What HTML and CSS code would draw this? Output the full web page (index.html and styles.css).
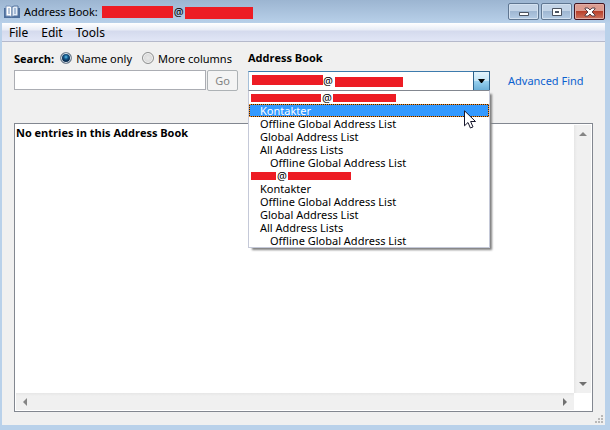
FILE: index.html
```html
<!DOCTYPE html>
<html lang="en">
<head>
    <meta charset="UTF-8">
    <meta name="viewport" content="width=device-width, initial-scale=1.0">
    <title>Address Book</title>
    <link rel="stylesheet" href="styles.css">
</head>
<body>
    <div class="window">
        <header class="titlebar">
            <svg class="book" width="16" height="14" viewBox="0 0 16 14">
                <path d="M0 3h2v8h5l1 1 1-1h5V3h2v10H0z" fill="#4d6f9c"/>
                <path d="M2 1h4l2 1v10l-2-1H2z" fill="#fff" stroke="#7894bb"/>
                <path d="M14 1h-4L8 2v10l2-1h4z" fill="#e3ecf7" stroke="#55749f"/>
                <path d="M4 4h2M4 6h2M4 8h2M10 4h2M10 6h2M10 8h2" stroke="#6a8cb8"/>
            </svg>
            <h1>Address Book:</h1>
            <span class="account"><i class="mask w71"></i>@<i class="mask w68 low"></i></span>
            <div class="caption-buttons">
                <button type="button" aria-label="Minimize">
                    <svg width="12" height="10" viewBox="0 0 12 10"><rect x="1" y="5" width="10" height="4" rx="1" fill="#4b5360"/><path d="M2 6h8v2H2z" fill="#fff"/></svg>
                </button>
                <button type="button" aria-label="Maximize">
                    <svg width="12" height="10" viewBox="0 0 12 10"><rect x="1" y="1" width="10" height="8" rx="1" fill="#4b5360"/><path d="M2 2h8v6H2z" fill="#fff"/><path d="M4 4h4v2H4z" fill="#4b5360"/></svg>
                </button>
                <button type="button" class="close" aria-label="Close">
                    <svg width="12" height="10" viewBox="0 0 12 10"><path d="M1 1h3l2 2 2-2h3v1L8 5l3 3v1H8L6 7 4 9H1V8l3-3-3-3z" fill="#fff" stroke="#5a4046"/></svg>
                </button>
            </div>
        </header>

        <nav class="menubar">
            <button type="button">File</button>
            <button type="button">Edit</button>
            <button type="button">Tools</button>
        </nav>

        <main class="content">
            <form class="search" onsubmit="return false">
                <div class="field">
                    <div class="modes">
                        <label class="strong" for="query">Search:</label>
                        <label class="mode"><input type="radio" name="mode" checked>Name only</label>
                        <label class="mode"><input type="radio" name="mode">More columns</label>
                    </div>
                    <div class="query">
                        <input type="text" id="query">
                        <button type="submit" disabled>Go</button>
                    </div>
                </div>

                <div class="book-picker">
                    <label class="strong" for="book">Address Book</label>
                    <div class="combo">
                        <select id="book">
                            <option>@</option>
                        </select>
                        <span class="arrow"><svg width="7" height="4" viewBox="0 0 7 4"><path d="M0 0h7L4 4H3z" fill="#000"/></svg></span>
                        <ul class="options" role="listbox" aria-label="Address Book">
                            <li role="option" class="group"><i class="mask w70"></i>@<i class="mask w63"></i></li>
                            <li role="option" class="selected" aria-selected="true">Kontakter</li>
                            <li role="option">Offline Global Address List</li>
                            <li role="option">Global Address List</li>
                            <li role="option">All Address Lists</li>
                            <li role="option" class="nested">Offline Global Address List</li>
                            <li role="option" class="group"><i class="mask w25"></i>@<i class="mask w63"></i></li>
                            <li role="option">Kontakter</li>
                            <li role="option">Offline Global Address List</li>
                            <li role="option">Global Address List</li>
                            <li role="option">All Address Lists</li>
                            <li role="option" class="nested">Offline Global Address List</li>
                        </ul>
                        <svg class="cursor" width="12" height="19" viewBox="0 0 12 19"><path d="M.5.800v15l3.500-3.300 2.400 5.500 2.600-1.100-2.400-5.400h4.900z" fill="#fff" stroke="#14142a"/></svg>
                    </div>
                </div>

                <a class="advanced" href="#">Advanced Find</a>
            </form>

            <section class="entries">
                <p>No entries in this Address Book</p>
                <div class="scroll vertical">
                    <svg width="8" height="4" viewBox="0 0 8 4"><path d="M0 4l4-4 4 4z" fill="#858585"/></svg>
                    <svg width="8" height="4" viewBox="0 0 8 4"><path d="M0 0h8L4 4z" fill="#707070"/></svg>
                </div>
                <div class="scroll horizontal">
                    <svg width="4" height="8" viewBox="0 0 4 8"><path d="M4 0v8L0 4z" fill="#858585"/></svg>
                    <svg width="4" height="8" viewBox="0 0 4 8"><path d="M0 0v8l4-4z" fill="#707070"/></svg>
                </div>
            </section>

            <svg class="grip" width="8" height="8" viewBox="0 0 8 8"><path d="M6 0h2v2H6zM3 3h2v2H3zM6 3h2v2H6zM0 6h2v2H0zM3 6h2v2H3zM6 6h2v2H6z" fill="#b8b8b8"/></svg>
        </main>
    </div>
</body>
</html>
```
FILE: styles.css
```css
* {
    box-sizing: border-box;
}

body {
    margin: 0;
    font-family: "Noto Sans", "Open Sans", sans-serif;
    font-size: 11px;
    line-height: 13px;
    color: #000;
}

button,
input,
select {
    font: inherit;
    color: inherit;
    margin: 0;
}

.window {
    display: flex;
    flex-direction: column;
    min-height: 100vh;
    padding: 0 5px 5px 2px;
    background: linear-gradient(#9cb5d1, #b9d1ea 24px, #b9d1ea);
}

/* title bar */
.titlebar {
    display: flex;
    align-items: center;
    height: 23px;
    padding-left: 2px;
}

.titlebar h1 {
    margin: 0 4px;
    font-size: 11px;
    font-weight: normal;
}

.account {
    display: flex;
    align-items: center;
    gap: 1px;
}

.mask {
    flex: none;
    height: 11px;
    background: #ed1c24;
}

.account .mask {
    height: 12px;
}

.w25 { width: 25px; }
.w63 { width: 63px; }
.w68 { width: 68px; }
.w70 { width: 70px; }
.w71 { width: 71px; }

.low {
    margin-top: 2px;
}

.caption-buttons {
    display: flex;
    gap: 2px;
    margin-left: auto;
}

.caption-buttons button {
    display: flex;
    align-items: center;
    justify-content: center;
    width: 31px;
    height: 17px;
    padding: 0;
    border: 1px solid #5f7691;
    border-radius: 2px;
    background: linear-gradient(#c3d4e7 50%, #9fb7d2 50%, #b4cbe4);
    box-shadow: inset 0 0 0 1px #d3e1f0;
}

.caption-buttons .close {
    border-color: #431420;
    background: linear-gradient(#dc9c90 50%, #b8412c 50%, #cf7560);
    box-shadow: inset 0 0 0 1px #e0aca4;
}

/* menu */
.menubar {
    display: flex;
    gap: 13px;
    height: 19px;
    padding-left: 7px;
    border-bottom: 1px solid #b5b9cb;
    background: linear-gradient(#fff, #e8ecf6 7px, #d4daed 8px, #e1e6f6);
}

.menubar button {
    padding: 0;
    border: 0;
    background: none;
    font-size: 12px;
}

/* search form */
.content {
    position: relative;
    display: flex;
    flex: 1;
    flex-direction: column;
    padding: 8px 12px 13px;
    background: #f0f0f0;
}

.search {
    display: flex;
    margin-bottom: 32px;
}

.strong {
    font-family: "Open Sans", "Noto Sans", sans-serif;
    font-weight: bold;
}

.field {
    width: 224px;
    margin-right: 10px;
}

.modes {
    display: flex;
    align-items: center;
    height: 16px;
    margin-bottom: 4px;
    white-space: nowrap;
}

.mode {
    display: flex;
    align-items: center;
    gap: 4px;
    margin-left: 6px;
}

.mode + .mode {
    margin-left: 10px;
}

.mode input {
    appearance: none;
    width: 12px;
    height: 12px;
    border: 1px solid #8e8f8f;
    border-radius: 50%;
    background: radial-gradient(#e8e8e8, #cfcfcf);
    box-shadow: inset 0 0 0 1px #f4f4f4;
}

.mode input:checked {
    border-color: #7b8794;
    background: radial-gradient(circle at 5px 4px, #5fc3ee, #155b8e 2px, #0b2e52 4px);
    box-shadow: inset 0 0 0 1px #e6ecf1;
}

.query {
    display: flex;
    gap: 1px;
}

.query input {
    flex: 1;
    min-width: 0;
    height: 20px;
    padding: 2px 4px;
    border: 1px solid #abadb3;
    background: #fff;
}

.query button {
    width: 31px;
    height: 21px;
    padding: 0;
    border: 1px solid #adb2b5;
    border-radius: 2px;
    background: #f4f4f4;
    color: #838383;
}

/* address book drop-down */
.book-picker {
    flex: none;
    width: 242px;
}

.book-picker .strong {
    display: block;
    height: 16px;
    margin-bottom: 5px;
    line-height: 16px;
}

.combo {
    position: relative;
}

.combo select {
    display: block;
    appearance: none;
    width: 100%;
    height: 20px;
    padding: 0 18px 2px 74px;
    border: 1px solid #a4bfd9;
    border-top-color: #3d7bad;
    border-radius: 0;
    outline: none;
    background:
        linear-gradient(#ed1c24, #ed1c24) 3px 3px / 71px 10px no-repeat,
        linear-gradient(#ed1c24, #ed1c24) 86px 5px / 68px 10px no-repeat,
        #fff;
}

.arrow {
    position: absolute;
    top: 0;
    right: 0;
    display: flex;
    align-items: center;
    justify-content: center;
    width: 17px;
    height: 20px;
    border: 1px solid #2c628b;
    background: linear-gradient(#e3f4fc, #c4e5f6 50%, #98d1ef 50%, #6cb0d8);
    pointer-events: none;
}

.options {
    position: absolute;
    top: 19px;
    left: 0;
    z-index: 1;
    width: 100%;
    margin: 0;
    padding: 0;
    border: 1px solid #c5c9d8;
    border-top-color: #828790;
    background: #fff;
    box-shadow: 3px 3px 2px -1px #808080;
    list-style: none;
}

.options li {
    height: 13px;
    padding-left: 11px;
    white-space: nowrap;
}

.options .nested {
    padding-left: 21px;
}

.options .group {
    display: flex;
    align-items: center;
    gap: 1px;
    padding-left: 2px;
}

.options .group .mask {
    height: 8px;
}

.options .selected {
    padding-left: 10px;
    border: 1px dotted #ff8c1a;
    background:
        linear-gradient(#39f, #39f) padding-box,
        linear-gradient(#222, #222) border-box;
    color: #fff;
    line-height: 11px;
}

.cursor {
    position: absolute;
    top: 39px;
    left: 216px;
    z-index: 2;
}

.advanced {
    margin: 24px 0 0 18px;
    color: #0b61cf;
    white-space: nowrap;
}

.advanced:link {
    text-decoration: none;
}

/* entry list */
.entries {
    display: grid;
    flex: 1;
    grid-template-columns: 1fr 17px;
    grid-template-rows: 1fr 17px;
    padding: 1px;
    border: 1px solid #828790;
    background: #fff;
}

.entries p {
    margin: 1px 0 0;
    font-family: "Open Sans", "Noto Sans", sans-serif;
    font-weight: bold;
}

.scroll {
    display: flex;
    align-items: center;
    justify-content: space-between;
    background: linear-gradient(#e6e6e6, #f0f0f0 3px);
}

.vertical {
    flex-direction: column;
    padding: 7px 0;
    background: linear-gradient(90deg, #e6e6e6, #f0f0f0 3px);
}

.horizontal {
    padding: 0 7px;
}

.grip {
    position: absolute;
    right: 2px;
    bottom: 2px;
}
```
